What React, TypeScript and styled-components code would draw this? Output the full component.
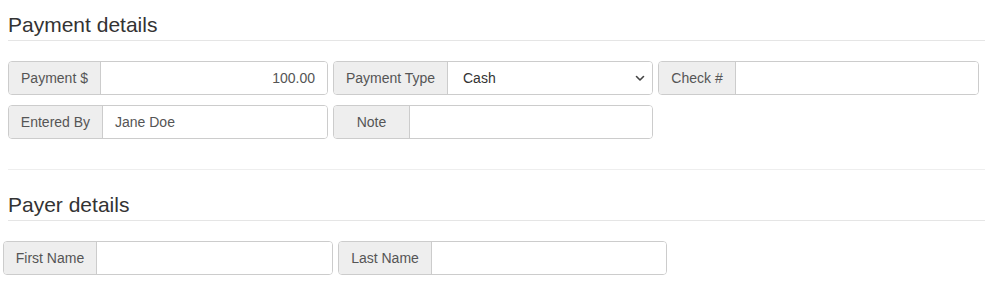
import React from "react";
import styled, { createGlobalStyle } from "styled-components";

const Global = createGlobalStyle`
  html, body { margin: 0; padding: 0; background: #fff; }
  body { font-family: "Liberation Sans", Arial, Helvetica, sans-serif; color: #333; }
  * { box-sizing: border-box; }
`;

const Page = styled.div`
  padding: 13px 0 0 8px;
  width: 985px;
`;

const Heading = styled.h2`
  margin: 0;
  font-size: 21px;
  font-weight: 400;
  line-height: 23px;
  color: #333;
  padding-bottom: 4px;
  border-bottom: 1px solid #e5e5e5;
`;

const Rows = styled.div<{ $shift?: number }>`
  display: flex;
  flex-direction: column;
  gap: 10px;
  margin: 20px 0 0 ${(p) => p.$shift ?? 0}px;
`;

const Row = styled.div`
  display: flex;
  gap: 5px;
`;

const Group = styled.div<{ $w: number }>`
  display: flex;
  width: ${(p) => p.$w}px;
  height: 34px;
  border: 1px solid #ccc;
  border-radius: 4px;
  overflow: hidden;
`;

const Addon = styled.span<{ $w: number }>`
  display: flex;
  align-items: center;
  justify-content: center;
  width: ${(p) => p.$w}px;
  flex: none;
  white-space: nowrap;
  background: #eee;
  border-right: 1px solid #ccc;
  color: #555;
  font-size: 14px;
`;

const Field = styled.div<{ $right?: boolean }>`
  flex: 1;
  display: flex;
  align-items: center;
  justify-content: ${(p) => (p.$right ? "flex-end" : "flex-start")};
  padding: 0 12px;
  background: #fff;
  color: #555;
  font-size: 14px;
  white-space: nowrap;
`;

const SelectField = styled.div`
  flex: 1;
  display: flex;
  align-items: center;
  justify-content: space-between;
  padding: 0 7px 0 15px;
  background: #fff;
  color: #333;
  font-size: 14px;
`;

const Divider = styled.hr`
  margin: 30px 0 23px;
  border: 0;
  border-top: 1px solid #eee;
`;

const Chevron = () => (
  <svg width="10" height="7" viewBox="0 0 10 7">
    <path d="M1.5 1.5 L5 5 L8.5 1.5" fill="none" stroke="#444" strokeWidth="1.6" strokeLinecap="round" strokeLinejoin="round" />
  </svg>
);

export default function App() {
  return (
    <>
      <Global />
      <Page>
        <Heading>Payment details</Heading>
        <Rows>
          <Row>
            <Group $w={320}>
              <Addon $w={92}>Payment $</Addon>
              <Field $right>100.00</Field>
            </Group>
            <Group $w={320}>
              <Addon $w={114}>Payment Type</Addon>
              <SelectField>
                <span>Cash</span>
                <Chevron />
              </SelectField>
            </Group>
            <Group $w={321}>
              <Addon $w={77}>Check #</Addon>
              <Field />
            </Group>
          </Row>
          <Row>
            <Group $w={320}>
              <Addon $w={94}>Entered By</Addon>
              <Field>Jane Doe</Field>
            </Group>
            <Group $w={320}>
              <Addon $w={76}>Note</Addon>
              <Field />
            </Group>
          </Row>
        </Rows>
        <Divider />
        <Heading>Payer details</Heading>
        <Rows $shift={-5}>
          <Row>
            <Group $w={330}>
              <Addon $w={93}>First Name</Addon>
              <Field />
            </Group>
            <Group $w={329}>
              <Addon $w={93}>Last Name</Addon>
              <Field />
            </Group>
          </Row>
        </Rows>
      </Page>
    </>
  );
}
